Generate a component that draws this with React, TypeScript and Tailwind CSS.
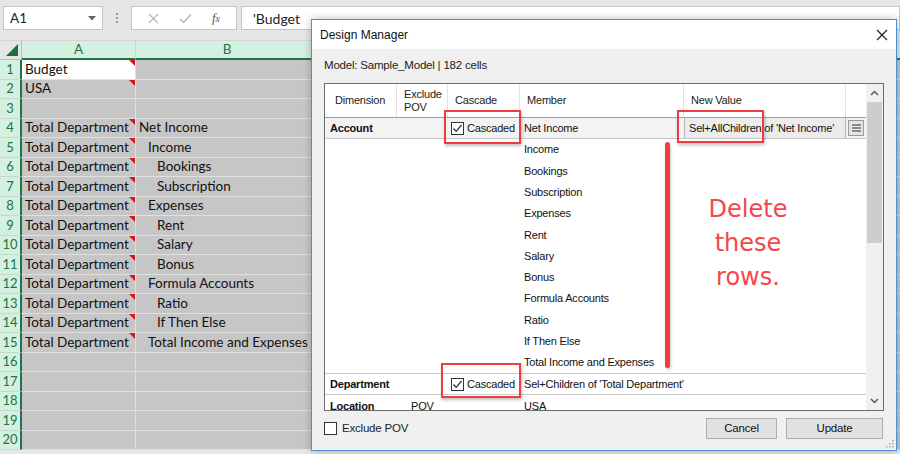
import React from "react";

// ── Sheet data ────────────────────────────────────────────
const rows: { a: string; b: string; indent: number; note: boolean }[] = [
  { a: "Budget", b: "", indent: 0, note: true },
  { a: "USA", b: "", indent: 0, note: true },
  { a: "", b: "", indent: 0, note: false },
  { a: "Total Department", b: "Net Income", indent: 0, note: true },
  { a: "Total Department", b: "Income", indent: 1, note: true },
  { a: "Total Department", b: "Bookings", indent: 2, note: true },
  { a: "Total Department", b: "Subscription", indent: 2, note: true },
  { a: "Total Department", b: "Expenses", indent: 1, note: true },
  { a: "Total Department", b: "Rent", indent: 2, note: true },
  { a: "Total Department", b: "Salary", indent: 2, note: true },
  { a: "Total Department", b: "Bonus", indent: 2, note: true },
  { a: "Total Department", b: "Formula Accounts", indent: 1, note: true },
  { a: "Total Department", b: "Ratio", indent: 2, note: true },
  { a: "Total Department", b: "If Then Else", indent: 2, note: true },
  { a: "Total Department", b: "Total Income and Expenses", indent: 1, note: true },
  { a: "", b: "", indent: 0, note: false },
  { a: "", b: "", indent: 0, note: false },
  { a: "", b: "", indent: 0, note: false },
  { a: "", b: "", indent: 0, note: false },
  { a: "", b: "", indent: 0, note: false },
];

const indentCls = ["pl-[3px]", "pl-[12px]", "pl-[21px]"];

const members = [
  "Income",
  "Bookings",
  "Subscription",
  "Expenses",
  "Rent",
  "Salary",
  "Bonus",
  "Formula Accounts",
  "Ratio",
  "If Then Else",
  "Total Income and Expenses",
];

// ── Small bits ────────────────────────────────────────────
function Check({ checked = true }: { checked?: boolean }) {
  return (
    <span className="w-[13px] h-[13px] border border-[#333] bg-white flex items-center justify-center shrink-0">
      {checked && (
        <svg width="11" height="11" viewBox="0 0 11 11">
          <path d="M1.5 5.5 L4.2 8.3 L9.5 2" fill="none" stroke="#333" strokeWidth="1.3" />
        </svg>
      )}
    </span>
  );
}

function Cascaded() {
  return (
    <div className="flex items-center gap-[3px] pl-[3px]">
      <Check />
      <span>Cascaded</span>
    </div>
  );
}

function RedBox({ className }: { className: string }) {
  return (
    <div
      className={
        "absolute border-2 border-[#ee3d42] shadow-[1px_2px_3px_rgba(0,0,0,0.25)] " + className
      }
    />
  );
}

// ── Dialog ────────────────────────────────────────────────
function DesignManager() {
  return (
    <div className="absolute left-[311px] top-[19px] w-[586px] h-[432px] border border-[#4a90d9] bg-[#f0f0f0] shadow-[0_0_8px_rgba(0,0,0,0.25)] flex flex-col font-['Liberation_Sans',sans-serif] text-[11px] tracking-[-0.2px] text-[#111]">
      {/* title bar */}
      <div className="h-[29px] bg-white flex items-center justify-between pl-[8px] pr-[8px] shrink-0">
        <span className="text-[12px] tracking-normal">Design Manager</span>
        <svg width="12" height="12" viewBox="0 0 12 12">
          <path d="M1 1 L11 11 M11 1 L1 11" stroke="#222" strokeWidth="1.2" />
        </svg>
      </div>

      <div className="flex-1 flex flex-col px-[12px]">
        <div className="h-[34px] flex items-center text-[11.5px] text-[#222]">
          Model: Sample_Model | 182 cells
        </div>

        {/* grid */}
        <div className="h-[328px] border border-[#6b6b6b] bg-white flex overflow-hidden">
          <div className="flex-1 flex flex-col">
            {/* header */}
            <div className="h-[34px] shrink-0 flex border-b border-[#a0a0a0] text-[#222]">
              <div className="w-[72px] border-r border-[#e3e3e3] flex items-center pl-[10px]">Dimension</div>
              <div className="w-[51px] border-r border-[#e3e3e3] flex items-center pl-[7px] leading-[13px]">
                Exclude
                <br />
                POV
              </div>
              <div className="w-[72px] border-r border-[#e3e3e3] flex items-center pl-[7px]">Cascade</div>
              <div className="w-[164px] border-r border-[#e3e3e3] flex items-center pl-[7px]">Member</div>
              <div className="w-[162px] border-r border-[#e3e3e3] flex items-center pl-[7px]">New Value</div>
              <div className="flex-1" />
            </div>

            {/* account row */}
            <div className="h-[21px] shrink-0 flex items-center bg-[#f3f3f3] border-b border-[#c8c8c8]">
              <div className="w-[123px] pl-[5px] font-bold">Account</div>
              <div className="w-[72px]">
                <Cascaded />
              </div>
              <div className="w-[164px] pl-[4px]">Net Income</div>
              <div className="w-[162px] pl-[4px] h-full flex items-center border-x border-[#b5b5b5] bg-[#ececec]">
                Sel+AllChildren of 'Net Income'
              </div>
              <div className="flex-1 h-full flex items-center justify-center">
                <div className="w-[16px] h-[16px] border border-[#9a9a9a] bg-[#e4e4e4] flex items-center justify-center">
                  <svg width="9" height="8" viewBox="0 0 9 8">
                    <path d="M0 1 H9 M0 4 H9 M0 7 H9" stroke="#333" strokeWidth="1.2" />
                  </svg>
                </div>
              </div>
            </div>

            {/* account members */}
            <div className="flex flex-col shrink-0">
              {members.map((m) => (
                <div key={m} className="h-[21.3px] flex items-center">
                  <div className="w-[195px]" />
                  <div className="pl-[4px]">{m}</div>
                </div>
              ))}
            </div>

            {/* department row */}
            <div className="h-[22px] shrink-0 flex items-center border-y border-[#c8c8c8]">
              <div className="w-[123px] pl-[5px] font-bold">Department</div>
              <div className="w-[72px]">
                <Cascaded />
              </div>
              <div className="pl-[4px]">Sel+Children of 'Total Department'</div>
            </div>

            {/* location row */}
            <div className="h-[21px] shrink-0 flex items-center">
              <div className="w-[72px] pl-[5px] font-bold">Location</div>
              <div className="w-[123px] pl-[14px]">POV</div>
              <div className="pl-[4px]">USA</div>
            </div>
          </div>

          {/* scrollbar */}
          <div className="w-[17px] bg-[#f0f0f0] flex flex-col items-center">
            <div className="h-[18px] flex items-center justify-center">
              <svg width="9" height="6" viewBox="0 0 9 6">
                <path d="M1 5 L4.5 1.5 L8 5" fill="none" stroke="#555" strokeWidth="1.4" />
              </svg>
            </div>
            <div className="w-[15px] h-[141px] bg-[#cdcdcd]" />
            <div className="flex-1" />
            <div className="h-[18px] flex items-center justify-center">
              <svg width="9" height="6" viewBox="0 0 9 6">
                <path d="M1 1 L4.5 4.5 L8 1" fill="none" stroke="#555" strokeWidth="1.4" />
              </svg>
            </div>
          </div>
        </div>

        {/* bottom */}
        <div className="flex items-center justify-between mt-[7px]">
          <div className="flex items-center gap-[5px] text-[#222] text-[11.5px]">
            <span className="w-[13px] h-[13px] border border-[#333] bg-white" />
            Exclude POV
          </div>
          <div className="flex gap-[9px] pr-[1px]">
            <div className="w-[71px] h-[21px] border border-[#adadad] bg-[#e1e1e1] flex items-center justify-center text-[11.5px]">
              Cancel
            </div>
            <div className="w-[97px] h-[21px] border border-[#adadad] bg-[#e1e1e1] flex items-center justify-center text-[11.5px]">
              Update
            </div>
          </div>
        </div>
      </div>

      {/* resize grip */}
      <svg className="absolute right-[2px] bottom-[2px]" width="9" height="9" viewBox="0 0 9 9">
        <g fill="#a8a8a8">
          <rect x="7" y="1" width="1.5" height="1.5" />
          <rect x="4" y="4" width="1.5" height="1.5" />
          <rect x="7" y="4" width="1.5" height="1.5" />
          <rect x="1" y="7" width="1.5" height="1.5" />
          <rect x="4" y="7" width="1.5" height="1.5" />
          <rect x="7" y="7" width="1.5" height="1.5" />
        </g>
      </svg>

      {/* annotations */}
      <RedBox className="left-[132px] top-[90px] w-[77px] h-[34px]" />
      <RedBox className="left-[365px] top-[90px] w-[87px] h-[33px]" />
      <RedBox className="left-[129px] top-[343px] w-[80px] h-[35px]" />
      <div className="absolute left-[353px] top-[122px] w-[5px] h-[226px] rounded-full bg-[#ee3d42] shadow-[1px_2px_3px_rgba(0,0,0,0.2)]" />
      <div className="absolute left-[386px] top-[172px] w-[100px] text-center font-['DejaVu_Sans',sans-serif] text-[24px] leading-[34px] tracking-normal text-[#f5474a]">
        Delete
        <br />
        these
        <br />
        rows.
      </div>
    </div>
  );
}

// ── App ───────────────────────────────────────────────────
export default function App() {
  return (
    <div className="relative w-[900px] h-[454px] overflow-hidden bg-[#e6e6e6] font-['Lato',sans-serif]">
      {/* formula bar */}
      <div className="h-[41px] flex items-start pt-[6px] border-b border-[#d4d4d4]">
        <div className="ml-[3px] w-[100px] h-[24px] bg-white border border-[#c6c6c6] flex items-center justify-between px-[6px] text-[13.5px] text-[#222]">
          <span>A1</span>
          <svg width="8" height="5" viewBox="0 0 8 5">
            <path d="M0 0 H8 L4 4.5 Z" fill="#666" />
          </svg>
        </div>
        <div className="w-[28px] h-[24px] flex flex-col items-center justify-center gap-[2px]">
          <span className="w-[2px] h-[2px] bg-[#999]" />
          <span className="w-[2px] h-[2px] bg-[#999]" />
          <span className="w-[2px] h-[2px] bg-[#999]" />
        </div>
        <div className="w-[106px] h-[24px] bg-white border border-[#c6c6c6] flex items-center justify-around px-[6px]">
          <svg width="11" height="11" viewBox="0 0 11 11">
            <path d="M1 1 L10 10 M10 1 L1 10" stroke="#b5b5b5" strokeWidth="1.2" />
          </svg>
          <svg width="13" height="11" viewBox="0 0 13 11">
            <path d="M1 6 L4.5 9.5 L12 1.5" fill="none" stroke="#b5b5b5" strokeWidth="1.3" />
          </svg>
          <span className="font-['Liberation_Serif',serif] italic text-[13px] text-[#555]">
            f<span className="text-[10px]">x</span>
          </span>
        </div>
        <div className="ml-[4px] flex-1 h-[24px] bg-white border border-[#c6c6c6] flex items-center pl-[11px] text-[14px] text-[#222]">
          'Budget
        </div>
      </div>

      {/* column headers */}
      <div className="h-[19px] flex text-[13.5px] text-[#217346]">
        <div className="w-[22px] bg-[#e6e6e6] border-r border-b border-[#bdbdbd] relative">
          <svg className="absolute right-[3px] bottom-[3px]" width="12" height="12" viewBox="0 0 12 12">
            <path d="M12 0 V12 H0 Z" fill="#1e6e42" />
          </svg>
        </div>
        <div className="w-[114px] bg-[#d3f0e0] border-r border-[#c6d9cd] border-b-2 border-b-[#217346] flex items-center justify-center">
          A
        </div>
        <div className="flex-1 bg-[#d3f0e0] border-b-2 border-b-[#217346] flex items-center">
          <span className="w-[182px] text-center">B</span>
        </div>
      </div>

      {/* rows */}
      <div className="flex flex-col">
        {rows.map((r, i) => (
          <div key={i} className="h-[19.5px] flex text-[13.5px] text-[#111] leading-none">
            <div className="w-[22px] bg-[#d3f0e0] border-r-2 border-[#217346] border-b border-b-[#c6d9cd] flex items-center justify-center text-[13px] text-[#217346]">
              {i + 1}
            </div>
            <div
              className={
                "relative w-[114px] border-r border-b border-[#e0e0e0] flex items-center pl-[3px] whitespace-nowrap " +
                (i === 0 ? "bg-white" : "bg-[#c6c6c6]")
              }
            >
              {r.a}
              {r.note && (
                <span className="absolute right-0 top-0 w-0 h-0 border-t-[6px] border-t-[#d6141c] border-l-[6px] border-l-transparent" />
              )}
            </div>
            <div className={"flex-1 bg-[#c6c6c6] border-b border-[#e0e0e0] flex items-center whitespace-nowrap " + indentCls[r.indent]}>
              {r.b}
            </div>
          </div>
        ))}
      </div>

      <DesignManager />
    </div>
  );
}
